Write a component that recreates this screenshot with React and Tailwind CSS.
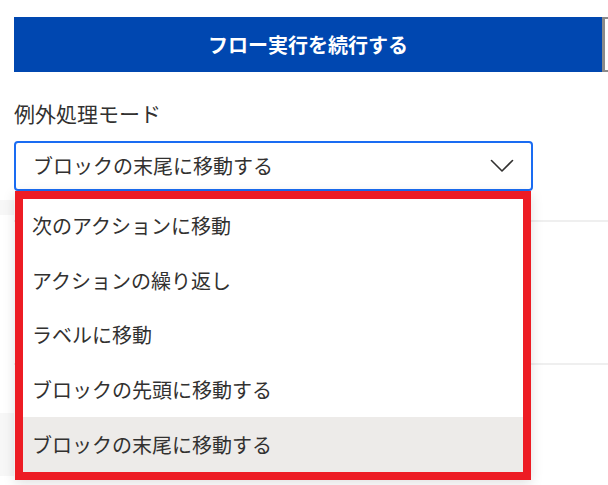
import React from "react";

const options = [
    "次のアクションに移動",
    "アクションの繰り返し",
    "ラベルに移動",
    "ブロックの先頭に移動する",
    "ブロックの末尾に移動する",
];

const Chevron = () => (
    <svg width="24" height="14" viewBox="0 0 24 14" fill="none">
        <path d="M1.5 1.5 L12 12 L22.5 1.5" stroke="#323130" strokeWidth="1.6" strokeLinecap="round" strokeLinejoin="round" />
    </svg>
);

const App = () => {
    const selected = options[4];

    return (
        <div
            className="relative w-[608px] h-[485px] bg-white overflow-hidden text-[#323130]"
            style={{ fontFamily: '"Noto Sans CJK JP", "Noto Sans", sans-serif' }}
        >
            {/* Action buttons */}
            <div className="flex pt-[17px]">
                <button className="ml-[14px] w-[588px] h-[55px] bg-[#0047b0] text-white text-[20px] font-bold leading-none">
                    フロー実行を続行する
                </button>
                <div className="flex-1 h-[55px] border-l-[3px] border-y-2 border-[#8a8a8a]"></div>
            </div>

            {/* Exception mode */}
            <div className="ml-[14px] mt-[27px] text-[21px] leading-[28px]">例外処理モード</div>
            <div className="ml-[14px] mt-[14px] w-[519px] h-[50px] flex items-center justify-between pl-[17px] pr-[17px] border-2 border-[#1a6cf2] rounded-[4px]">
                <span className="text-[20px] leading-none">{selected}</span>
                <Chevron />
            </div>

            {/* Content behind the open list */}
            <div className="flex flex-col">
                <div className="mt-[9px] w-[14px] h-[15px] bg-[#f7f7f7]"></div>
                <div className="mt-[5px] ml-[14px] h-[2px] bg-[#efefef]"></div>
                <div className="mt-[141px] ml-[14px] h-[2px] bg-[#efefef]"></div>
                <div className="mt-[48px] w-[14px] h-[63px] bg-[#f7f7f7]"></div>
            </div>

            {/* Open dropdown list */}
            <div className="absolute left-[15px] top-[191px] w-[516px] h-[289px] border-[8px] border-[#ed1c24] bg-white shadow-[0_3px_12px_rgba(0,0,0,0.13)] flex flex-col">
                {options.map((opt) => (
                    <div
                        key={opt}
                        className={`h-[54.6px] flex items-center pl-[9px] text-[20px] leading-none ${opt === selected ? "bg-[#edebe9]" : ""}`}
                    >
                        {opt}
                    </div>
                ))}
            </div>
        </div>
    );
};

export default App;
